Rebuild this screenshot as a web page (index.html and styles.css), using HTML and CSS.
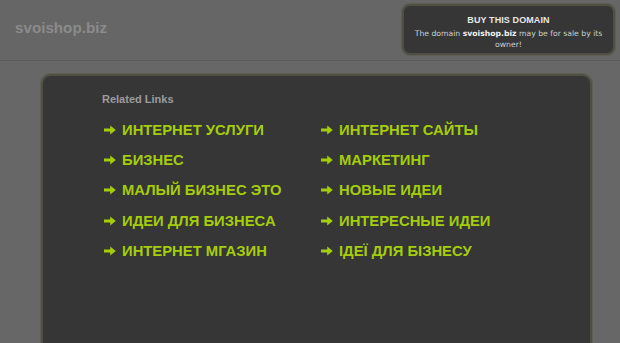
FILE: index.html
```html
<!DOCTYPE html>
<html>
<head>
<meta charset="utf-8">
<link rel="stylesheet" href="styles.css">
</head>
<body>
<header class="top">
  <div class="site">svoishop.biz</div>
  <div class="buy">
    <div class="buy-title">BUY THIS DOMAIN</div>
    <div class="buy-text">The domain <b>svoishop.biz</b> may be for sale by its owner!</div>
  </div>
</header>
<main class="panel">
  <div class="heading">Related Links</div>
  <ul class="links">
    <li><svg class="arr" viewBox="0 0 12 10"><path d="M0 3.4h6.2V0.4L11.8 5 6.2 9.6V6.6H0z" fill="currentColor"/></svg>ИНТЕРНЕТ УСЛУГИ</li>
    <li><svg class="arr" viewBox="0 0 12 10"><path d="M0 3.4h6.2V0.4L11.8 5 6.2 9.6V6.6H0z" fill="currentColor"/></svg>ИНТЕРНЕТ САЙТЫ</li>
    <li><svg class="arr" viewBox="0 0 12 10"><path d="M0 3.4h6.2V0.4L11.8 5 6.2 9.6V6.6H0z" fill="currentColor"/></svg>БИЗНЕС</li>
    <li><svg class="arr" viewBox="0 0 12 10"><path d="M0 3.4h6.2V0.4L11.8 5 6.2 9.6V6.6H0z" fill="currentColor"/></svg>МАРКЕТИНГ</li>
    <li><svg class="arr" viewBox="0 0 12 10"><path d="M0 3.4h6.2V0.4L11.8 5 6.2 9.6V6.6H0z" fill="currentColor"/></svg>МАЛЫЙ БИЗНЕС ЭТО</li>
    <li><svg class="arr" viewBox="0 0 12 10"><path d="M0 3.4h6.2V0.4L11.8 5 6.2 9.6V6.6H0z" fill="currentColor"/></svg>НОВЫЕ ИДЕИ</li>
    <li><svg class="arr" viewBox="0 0 12 10"><path d="M0 3.4h6.2V0.4L11.8 5 6.2 9.6V6.6H0z" fill="currentColor"/></svg>ИДЕИ ДЛЯ БИЗНЕСА</li>
    <li><svg class="arr" viewBox="0 0 12 10"><path d="M0 3.4h6.2V0.4L11.8 5 6.2 9.6V6.6H0z" fill="currentColor"/></svg>ИНТЕРЕСНЫЕ ИДЕИ</li>
    <li><svg class="arr" viewBox="0 0 12 10"><path d="M0 3.4h6.2V0.4L11.8 5 6.2 9.6V6.6H0z" fill="currentColor"/></svg>ИНТЕРНЕТ МГАЗИН</li>
    <li><svg class="arr" viewBox="0 0 12 10"><path d="M0 3.4h6.2V0.4L11.8 5 6.2 9.6V6.6H0z" fill="currentColor"/></svg>ІДЕЇ ДЛЯ БІЗНЕСУ</li>
  </ul>
</main>
</body>
</html>
```
FILE: styles.css
```css
html, body {
  margin: 0;
  padding: 0;
  background: #676767;
  font-family: "Liberation Sans", Arial, sans-serif;
  overflow: hidden;
  height: 343px;
}
.top {
  height: 60px;
  border-bottom: 1px solid #5c5c5c;
  background: #666666;
  display: flex;
  justify-content: space-between;
  align-items: flex-start;
}
.site {
  margin: 18px 0 0 15px;
  font-size: 15.2px;
  font-weight: bold;
  color: #8b8b8b;
  line-height: 20px;
}
.buy {
  margin: 4px 5px 0 0;
  width: 213px;
  height: 51px;
  box-sizing: border-box;
  background: #363636;
  border: 2px solid #4f5042;
  border-radius: 8px;
  box-shadow: 0 0 0 1px #5d5d55;
  text-align: center;
  color: #dcdcdc;
  padding-top: 9px;
}
.buy-title {
  font-size: 9px;
  font-weight: bold;
  line-height: 11px;
  color: #e6e6e6;
  letter-spacing: 0.1px;
  margin-bottom: 2px;
}
.buy-text {
  font-family: "DejaVu Sans", Verdana, sans-serif;
  font-size: 7.7px;
  line-height: 11px;
  color: #cfcfcf;
  padding: 0 6px;
}
.buy-text b { color: #f0f0f0; }
.panel {
  margin: 13px 0 0 41px;
  width: 551px;
  height: 300px;
  box-sizing: border-box;
  background: #363636;
  border: 2px solid #4f5042;
  border-radius: 10px;
  box-shadow: 0 0 0 1px #5e5e56;
  padding: 16px 0 0 59px;
}
.heading {
  font-size: 11px;
  font-weight: bold;
  color: #9c9c9c;
  line-height: 14px;
}
.links {
  list-style: none;
  margin: 14px 0 0 2px;
  padding: 0;
  display: grid;
  grid-template-columns: 217px 217px;
  grid-auto-rows: 30.2px;
}
.links li {
  display: flex;
  align-items: center;
  font-size: 14.8px;
  font-weight: bold;
  color: #a4cd0c;
  line-height: 20px;
  height: 20px;
}
.arr {
  width: 12px;
  height: 10px;
  margin-right: 6px;
  flex: none;
}
```
